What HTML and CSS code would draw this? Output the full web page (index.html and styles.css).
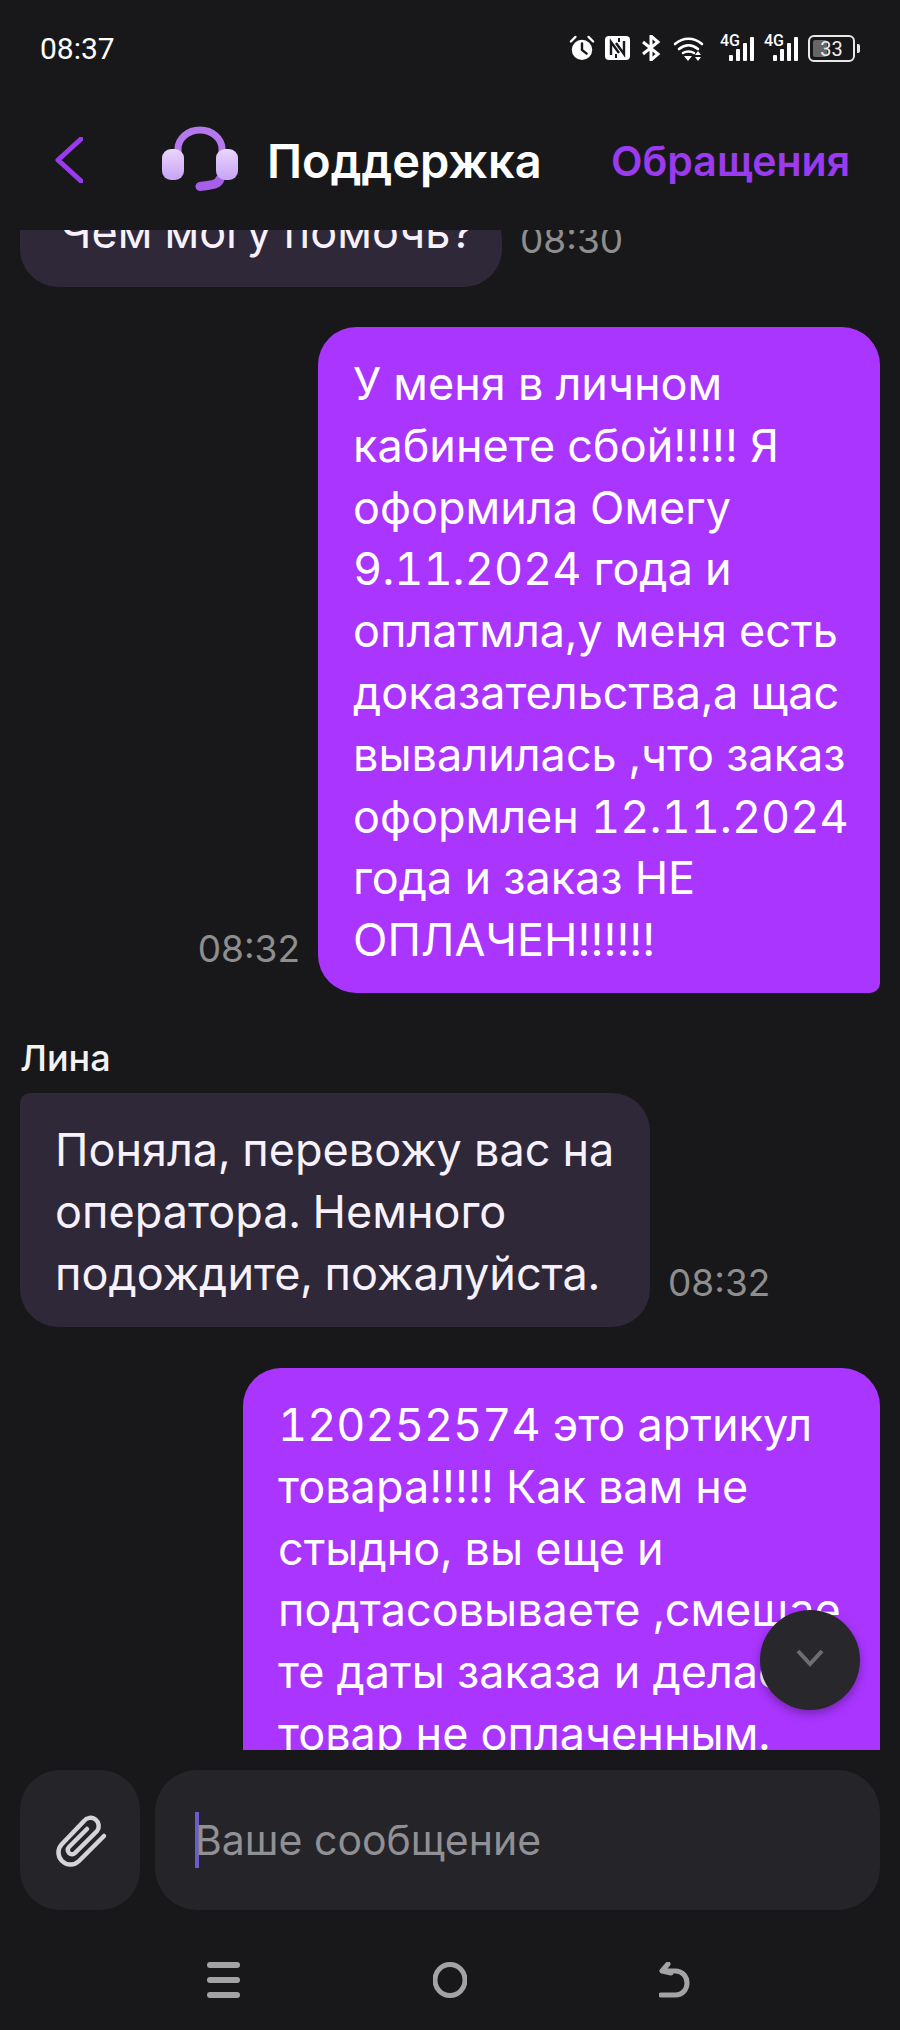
FILE: index.html

```html
<!DOCTYPE html>
<html lang="ru">
<head>
  <meta charset="UTF-8">
  <title>Поддержка</title>
  <link rel="stylesheet" href="styles.css">
</head>
<body>

  <div class="status-bar">
    <span class="status-time">08:37</span>
    <div class="status-icons">
      <svg class="ic-alarm" viewBox="0 0 28 28"><path d="M2 7 L7 2 M26 7 L21 2" stroke="#fff" stroke-width="2.4" stroke-linecap="round"/><circle cx="14" cy="16" r="11" fill="#fff"/><path d="M14 9 V16 L19 20" stroke="#18181b" stroke-width="2.6" fill="none" stroke-linecap="round"/></svg>
      <svg class="ic-nfc" viewBox="0 0 25 24"><rect width="25" height="24" rx="4" fill="#fff"/><path d="M6 19 V6 L14 17 M19 5 V18 L11 7" stroke="#18181b" stroke-width="2.4" fill="none"/><path d="M14 2 V6 M11 22 V18" stroke="#18181b" stroke-width="2"/></svg>
      <svg class="ic-bt" viewBox="0 0 20 26"><path d="M2 7 L17 19 L10 25 V1 L17 7 L2 19" stroke="#fff" stroke-width="3" fill="none"/></svg>
      <svg class="ic-wifi" viewBox="0 0 31 25"><g fill="none" stroke="#fff" stroke-width="2.6" stroke-linecap="round"><path d="M2 8 C10 1 21 1 29 8"/><path d="M6 13 C12 8 19 8 25 13"/><path d="M10 17 C13 15 18 15 21 17"/></g><path d="M11 20 H19 L15 25 Z M22 19 L25 15 L28 19 Z M22 21 H28 L25 25 Z" fill="#fff"/></svg>
      <div class="signal"><span class="signal-label">4G</span><svg viewBox="0 0 35 26"><g fill="#fff"><rect x="9" y="20" width="4" height="6" rx="1"/><rect x="16" y="14" width="4" height="12" rx="1"/><rect x="23" y="8" width="4" height="18" rx="1"/><rect x="30" y="2" width="4" height="24" rx="1"/></g></svg></div>
      <div class="signal"><span class="signal-label">4G</span><svg viewBox="0 0 35 26"><g fill="#fff"><rect x="9" y="20" width="4" height="6" rx="1"/><rect x="16" y="14" width="4" height="12" rx="1"/><rect x="23" y="8" width="4" height="18" rx="1"/><rect x="30" y="2" width="4" height="24" rx="1"/></g></svg></div>
      <div class="battery"><div class="battery-fill"></div><span class="battery-num">33</span></div>
      <div class="battery-nub"></div>
    </div>
  </div>

  <header class="top-bar">
    <svg class="back-icon" viewBox="0 0 28 46"><path d="M26 2 L3 23 L26 44" fill="none" stroke="#9b3bef" stroke-width="5" stroke-linecap="round" stroke-linejoin="round"/></svg>
    <svg class="headset" viewBox="0 0 80 70">
      <defs>
        <linearGradient id="cup" x1="0" y1="0" x2="0" y2="1"><stop offset="0" stop-color="#e8d6fc"/><stop offset="1" stop-color="#c9a2f5"/></linearGradient>
      </defs>
      <path d="M18 28 V24 A22 19 0 0 1 62 24 V28" fill="none" stroke="#b578ee" stroke-width="7"/>
      <path d="M60 54 C58 60 52 60 40 61.5" fill="none" stroke="#a65fe8" stroke-width="9" stroke-linecap="round"/>
      <rect x="2" y="24" width="22" height="31" rx="9" fill="url(#cup)"/>
      <rect x="56" y="24" width="22" height="31" rx="9" fill="url(#cup)"/>
    </svg>
    <h1 class="title">Поддержка</h1>
    <a class="top-link">Обращения</a>
  </header>

  <main class="chat">
    <div class="chat-list">
      <div class="row row-first">
        <div class="bubble bubble-in bubble-1">Чем могу помочь?</div>
        <span class="time time-first">08:30</span>
      </div>
      <div class="row row-out row-before-name">
        <span class="time">08:32</span>
        <div class="bubble bubble-out bubble-2">У меня в личном<br>кабинете сбой!!!!! Я<br>оформила Омегу<br>9.11.2024 года и<br>оплатмла,у меня есть<br>доказательства,а щас<br>вывалилась ,что заказ<br>оформлен 12.11.2024<br>года и заказ НЕ<br>ОПЛАЧЕН!!!!!!</div>
      </div>
      <div class="sender">Лина</div>
      <div class="row">
        <div class="bubble bubble-in bubble-3">Поняла, перевожу вас на<br>оператора. Немного<br>подождите, пожалуйста.</div>
        <span class="time">08:32</span>
      </div>
      <div class="row row-out">
        <div class="bubble bubble-out bubble-4">120252574 это артикул<br>товара!!!!! Как вам не<br>стыдно, вы еще и<br>подтасовываете ,смещае<br>те даты заказа и делаете<br>товар не оплаченным.</div>
      </div>
    </div>
    <div class="scroll-btn">
      <svg viewBox="0 0 30 18"><path d="M3 2 L15 15 L27 2" fill="none" stroke="#6d6d72" stroke-width="4"/></svg>
    </div>
  </main>

  <div class="input-row">
    <div class="attach">
      <svg viewBox="0 0 100 70"><path d="M73 26 L48 51 A12 12 0 0 1 31 34 L53 11 A8 8 0 0 1 66 21 L44 43 A4 4 0 0 1 38 37 L56 19" fill="none" stroke="#d4d4d9" stroke-width="4.5" stroke-linecap="round"/></svg>
    </div>
    <div class="input-box">
      <span class="caret"></span>
      <span class="placeholder">Ваше сообщение</span>
    </div>
  </div>

  <nav class="nav-bar">
    <svg viewBox="0 0 34 36"><g fill="#a3a3a3"><rect width="33" height="6" y="0" rx="3"/><rect width="33" height="6" y="15" rx="3"/><rect width="33" height="6" y="30" rx="3"/></g></svg>
    <svg viewBox="0 0 34 36"><ellipse cx="17" cy="18" rx="15" ry="15.5" fill="none" stroke="#a3a3a3" stroke-width="5"/></svg>
    <svg viewBox="0 0 34 36"><path d="M9 2 L3 9 L12 11 M4 9 H16 C32 9 32 33 16 33 H2" fill="none" stroke="#a3a3a3" stroke-width="5" stroke-linecap="round" stroke-linejoin="round"/></svg>
  </nav>

</body>
</html>
```

FILE: styles.css

```css
* {
  box-sizing: border-box;
}

html, body {
  margin: 0;
  padding: 0;
}

body {
  width: 900px;
  height: 2030px;
  overflow: hidden;
  background-color: #18181b;
  color: #f6f1fb;
  font-family: Inter, "Noto Sans", sans-serif;
}

/* status bar */
.status-bar {
  height: 98px;
  padding: 34px 40px 0 40px;
  display: flex;
  justify-content: space-between;
  align-items: flex-start;
}

.status-time {
  font-family: Roboto, sans-serif;
  font-size: 30px;
  line-height: 30px;
  color: #fff;
}

.status-icons {
  display: flex;
  align-items: center;
  height: 28px;
}

.ic-alarm {
  width: 26px;
  height: 28px;
  margin-right: 10px;
}

.ic-nfc {
  width: 25px;
  height: 24px;
  margin-right: 11px;
}

.ic-bt {
  width: 20px;
  height: 26px;
  margin-right: 12px;
}

.ic-wifi {
  width: 31px;
  height: 25px;
  margin-right: 16px;
}

.signal {
  position: relative;
  width: 35px;
  height: 26px;
  margin-right: 9px;
}

.signal svg {
  display: block;
  width: 35px;
  height: 26px;
}

.signal-label {
  position: absolute;
  left: 0;
  top: -2px;
  font-family: Roboto, sans-serif;
  font-size: 16px;
  font-weight: 500;
  line-height: 16px;
  color: #fff;
}

.battery {
  position: relative;
  width: 47px;
  height: 27px;
  border: 2px solid #e8e8e8;
  border-radius: 6px;
  padding: 3px;
  margin-right: 2px;
}

.battery-fill {
  width: 14px;
  height: 100%;
  background-color: #666;
  border-radius: 2px;
}

.battery-num {
  position: absolute;
  left: 0;
  right: 0;
  top: 1px;
  text-align: center;
  font-family: Roboto, sans-serif;
  font-size: 20px;
  line-height: 22px;
  color: #eee;
}

.battery-nub {
  width: 3px;
  height: 9px;
  background-color: #e8e8e8;
  border-radius: 0 2px 2px 0;
}

/* header */
.top-bar {
  height: 132px;
  display: flex;
  align-items: flex-start;
  padding: 27px 50px 0 55px;
}

.back-icon {
  width: 28px;
  height: 46px;
  margin-top: 12px;
  flex-shrink: 0;
}

.headset {
  width: 80px;
  height: 70px;
  margin-left: 77px;
  flex-shrink: 0;
}

.title {
  margin: 6px 0 0 27px;
  font-size: 47px;
  line-height: 60px;
  font-weight: 600;
  color: #fff;
}

.top-link {
  margin: 6px 0 0 auto;
  font-size: 41px;
  line-height: 60px;
  font-weight: 600;
  color: #9b3bef;
}

/* chat */
.chat {
  position: relative;
  height: 1520px;
  overflow: hidden;
}

.chat-list {
  margin-top: -29px;
  padding: 0 20px;
}

.row {
  display: flex;
  align-items: flex-end;
  gap: 18px;
  margin-bottom: 41px;
}

.row-out {
  justify-content: flex-end;
}

.row-first {
  align-items: flex-start;
  margin-bottom: 40px;
}

.row-before-name {
  margin-bottom: 45px;
}

.bubble {
  font-size: 45px;
  font-variant-numeric: tabular-nums;
  line-height: 61.8px;
  padding: 26px 35px 20px 35px;
  white-space: nowrap;
  overflow: hidden;
}

.bubble-in {
  background-color: #2e2839;
  border-radius: 10px 38px 38px 38px;
}

.bubble-out {
  background-color: #a935ff;
  color: #fff;
  border-radius: 38px 38px 10px 38px;
}

.bubble-1 {
  width: 482px;
  height: 86px;
  padding: 0 40px;
}

.bubble-2 {
  width: 562px;
  height: 666px;
}

.bubble-3 {
  width: 630px;
  height: 234px;
}

.bubble-4 {
  width: 637px;
  height: 420px;
  border-radius: 38px 38px 0 0;
}

.time {
  font-size: 37px;
  line-height: 44px;
  color: #8e8e8e;
  padding-bottom: 22px;
}

.time-first {
  padding: 17px 0 0 0;
}

.sender {
  font-size: 36px;
  font-weight: 500;
  line-height: 40px;
  color: #f2f2f2;
  margin-bottom: 15px;
}

.scroll-btn {
  position: absolute;
  right: 40px;
  bottom: 40px;
  width: 100px;
  height: 100px;
  border-radius: 50%;
  background-color: #27272c;
  box-shadow: 0 4px 10px rgba(0, 0, 0, 0.3);
  display: flex;
  align-items: center;
  justify-content: center;
}

.scroll-btn svg {
  width: 30px;
  height: 18px;
  margin-bottom: 4px;
}

/* input */
.input-row {
  display: flex;
  gap: 15px;
  padding: 20px 20px 0 20px;
  height: 160px;
}

.attach {
  width: 120px;
  height: 140px;
  border-radius: 40px;
  background-color: #242429;
  display: flex;
  align-items: center;
  justify-content: center;
}

.attach svg {
  width: 100px;
  height: 70px;
  margin: 10px 0 0 2px;
}

.input-box {
  flex: 1;
  height: 140px;
  border-radius: 42px;
  background-color: #242429;
  display: flex;
  align-items: center;
  padding-left: 40px;
}

.caret {
  width: 4px;
  height: 56px;
  background-color: #6a5bd0;
  margin-right: -4px;
}

.placeholder {
  font-size: 41px;
  color: #909095;
}

/* navigation */
.nav-bar {
  display: flex;
  justify-content: center;
  gap: 192px;
  padding-top: 52px;
}

.nav-bar svg {
  width: 34px;
  height: 36px;
}
```
